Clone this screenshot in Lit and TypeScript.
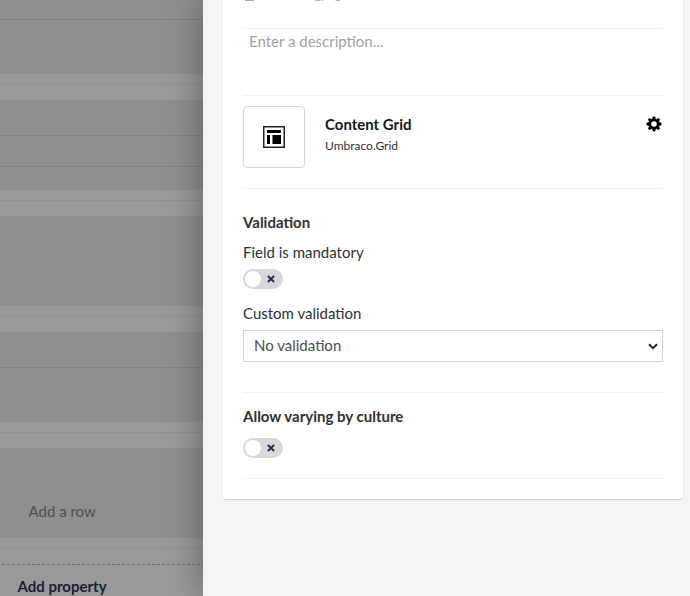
import { LitElement, html, css, svg } from "lit";
import { customElement } from "lit/decorators.js";

@customElement("umb-toggle")
class UmbToggle extends LitElement {
  static styles = css`
    :host {
      display: flex;
      align-items: center;
      justify-content: space-between;
      box-sizing: border-box;
      width: 40px;
      height: 20px;
      padding: 0 8px 0 2px;
      border-radius: 10px;
      background: #d8d7d9;
    }
    .knob {
      width: 16px;
      height: 16px;
      border-radius: 50%;
      background: #fff;
    }
    svg {
      display: block;
    }
  `;
  render() {
    return html`<span class="knob"></span>
      <svg width="8" height="8" viewBox="0 0 8 8">
        <path d="M0.900 1 L7.100 7 M7.100 1 L0.900 7" stroke="#222b52" stroke-width="1.9" />
      </svg>`;
  }
}

@customElement("app-root")
class AppRoot extends LitElement {
  static styles = css`
    :host {
      display: flex;
      width: 690px;
      height: 596px;
      overflow: hidden;
      font-family: Lato, "Liberation Sans", sans-serif;
      font-size: 15px;
      line-height: 20px;
      color: #303033;
      background: #999;
    }
    .backdrop {
      width: 203px;
      flex: none;
    }
    .block {
      box-sizing: border-box;
      height: 90px;
      background: #8f8f8f;
    }
    .block.first {
      height: 74px;
    }
    .rule {
      box-sizing: border-box;
      border-bottom: 1px solid #828282;
    }
    .r20 {
      height: 20px;
    }
    .r36 {
      height: 36px;
    }
    .r31 {
      height: 31px;
    }
    .gap {
      height: 26px;
      box-sizing: border-box;
      padding-top: 10px;
    }
    .gap::before {
      content: "";
      display: block;
      height: 1px;
      background: #909090;
    }
    .add-row {
      padding: 53px 0 0 28.5px;
      color: #505050;
    }
    .dashes {
      height: 1px;
      background: repeating-linear-gradient(90deg, #999 0 2px, #707070 2px 5px);
    }
    .add-property {
      padding: 11px 0 0 17.5px;
      font-weight: 700;
      color: #1a1f3a;
    }
    .panel {
      flex: 1;
      background: #f5f3f4;
      box-shadow: 0 0 34px rgba(0, 0, 0, 0.36);
      padding-left: 20px;
    }
    .card {
      box-sizing: border-box;
      width: 460px;
      height: 499px;
      padding: 0 20px;
      background: #fff;
      border-radius: 0 0 3px 3px;
      box-shadow: 0 1px 1px rgba(0, 0, 0, 0.16);
    }
    section {
      box-sizing: border-box;
      width: 420px;
      border-bottom: 1px solid #f3f2f4;
    }
    .alias {
      height: 29px;
      display: flex;
      align-items: flex-start;
      font-size: 13px;
      color: #aaa9ac;
    }
    .alias svg {
      margin-top: -14px;
      flex: none;
    }
    .alias span {
      flex: none;
      margin: -16px 0 0 6px;
    }
    .description {
      height: 67px;
      padding: 2px 6px;
      color: #a2a1a4;
    }
    .editor {
      height: 93px;
      display: flex;
      align-items: flex-start;
      padding-top: 10px;
    }
    .thumb {
      box-sizing: border-box;
      width: 62px;
      height: 62px;
      padding-bottom: 1px;
      border: 1px solid #d8d7d9;
      border-radius: 4px;
      display: flex;
      align-items: center;
      justify-content: center;
    }
    .editor-text {
      flex: 1;
      padding: 8px 0 0 20px;
    }
    .name {
      font-weight: 700;
      color: #161616;
    }
    .kind {
      font-size: 12px;
      line-height: 24px;
    }
    .gear {
      margin: 10px 1px 0 0;
    }
    .validation {
      height: 204px;
      padding-top: 23px;
    }
    .heading {
      font-weight: 700;
    }
    .label {
      margin-top: 10px;
    }
    .validation umb-toggle {
      margin-top: 7px;
    }
    .label.custom {
      margin-top: 14px;
    }
    .select {
      box-sizing: border-box;
      height: 32px;
      margin-top: 7px;
      padding: 0 4px 0 10px;
      border: 1px solid #d3d2d5;
      display: flex;
      align-items: center;
      justify-content: space-between;
      color: #4c4c50;
    }
    .select span {
      padding-bottom: 2px;
    }
    .culture {
      height: 86px;
      padding-top: 13px;
    }
    .culture umb-toggle {
      margin-top: 12px;
    }
    svg {
      display: block;
    }
  `;

  private gear() {
    const teeth = [0, 45, 90, 135, 180, 225, 270, 315];
    return html`<svg class="gear" width="16" height="16" viewBox="0 0 16 16">
      <circle cx="8" cy="8" r="4.300" fill="none" stroke="#000" stroke-width="3" />
      ${teeth.map(
        (a) => svg`<rect x="6.600" y="0.500" width="2.800" height="3" rx="0.800" transform="rotate(${a} 8 8)" />`
      )}
    </svg>`;
  }

  render() {
    return html`
      <div class="backdrop">
        <div class="block first"><div class="rule r20"></div></div>
        <div class="gap"></div>
        <div class="block">
          <div class="rule r36"></div>
          <div class="rule r31"></div>
        </div>
        <div class="gap"></div>
        <div class="block"></div>
        <div class="gap"></div>
        <div class="block"><div class="rule r36"></div></div>
        <div class="gap"></div>
        <div class="block add-row">Add a row</div>
        <div class="gap"></div>
        <div class="dashes"></div>
        <div class="add-property">Add property</div>
      </div>
      <div class="panel">
        <div class="card">
          <section class="alias">
            <svg width="12" height="15" viewBox="0 0 12 15">
              <path d="M2 7h9v8H2z" fill="#aaa9ac" />
              <path d="M4 7V4a2.5 2.5 0 0 1 5 0v3" fill="none" stroke="#aaa9ac" stroke-width="1.5" />
            </svg>
            <span>container_page</span>
          </section>
          <section class="description">Enter a description...</section>
          <section class="editor">
            <div class="thumb">
              <svg width="22" height="22" viewBox="0 0 22 22">
                <rect x="0.75" y="0.75" width="20.5" height="20.5" fill="none" stroke="#222" stroke-width="1.5" />
                <path d="M4 4h14v3H4zM4 9h3v9H4zM9.500 9H18v9H9.500z" />
              </svg>
            </div>
            <div class="editor-text">
              <div class="name">Content Grid</div>
              <div class="kind">Umbraco.Grid</div>
            </div>
            ${this.gear()}
          </section>
          <section class="validation">
            <div class="heading">Validation</div>
            <div class="label">Field is mandatory</div>
            <umb-toggle></umb-toggle>
            <div class="label custom">Custom validation</div>
            <div class="select">
              <span>No validation</span>
              <svg width="10" height="7" viewBox="0 0 10 7">
                <path d="M1 1.200 L5 5.200 L9 1.200" fill="none" stroke="#222" stroke-width="2" />
              </svg>
            </div>
          </section>
          <section class="culture">
            <div class="heading">Allow varying by culture</div>
            <umb-toggle></umb-toggle>
          </section>
        </div>
      </div>
    `;
  }
}
